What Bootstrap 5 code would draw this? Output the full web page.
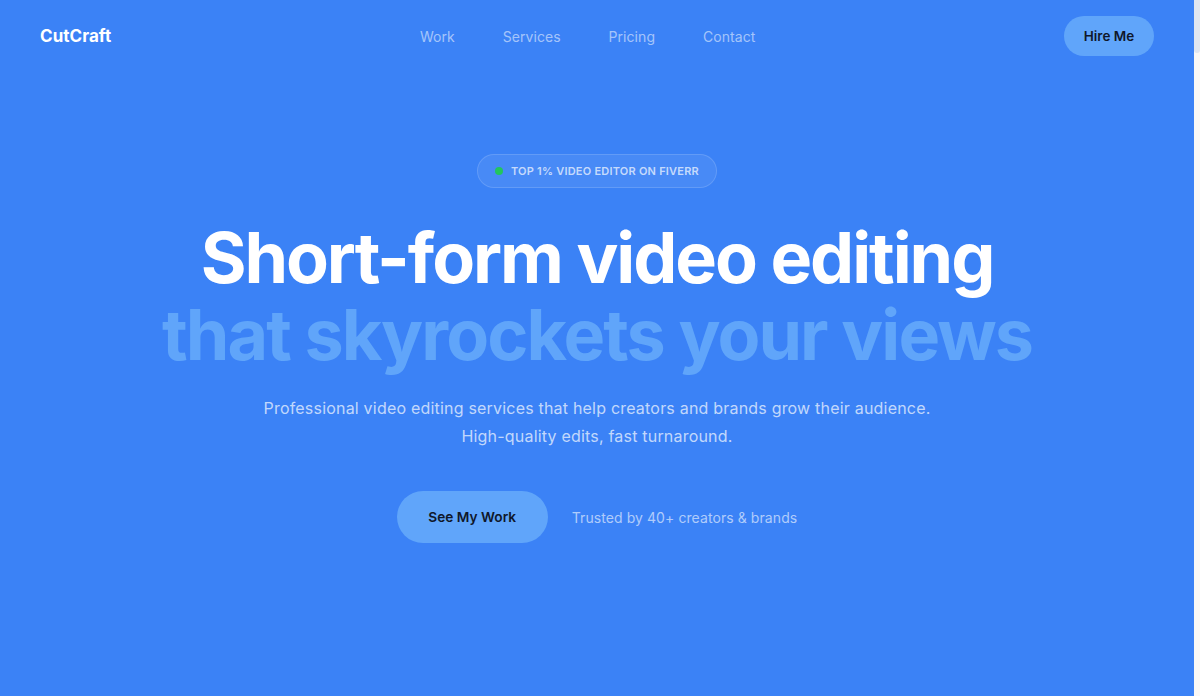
<!DOCTYPE html>
<html lang="en"><head><meta charset="utf-8"><title>CutCraft</title>
<link href="https://cdn.jsdelivr.net/npm/bootstrap@5.3.0/dist/css/bootstrap.min.css" rel="stylesheet">
<style>
html,body{height:100%;overflow:hidden}
body{background:#faf8f5;font-family:Inter,"Liberation Sans",sans-serif}
.shell{height:696px;display:flex}
.stage{flex:1;background:#3b82f6;color:#fff;min-width:0}
.rail{width:6px;background:#faf8f5}
.rail-thumb{height:53px;background:#e0e6f0;border-radius:0 0 3px 3px}
.topbar{height:72px;padding:0 40px}
.brand{font-size:17px;font-weight:700;color:#fff;letter-spacing:.05px;line-height:20px}
.menu{gap:48px}
.menu a{font-size:14px;color:rgba(255,255,255,.55);text-decoration:none;letter-spacing:.05px}
.hire{background:#60a5fa;color:#0f172a;font-weight:600;font-size:13.5px;border:0;border-radius:20px;padding:0;width:90px;height:40px}
.pill{margin-top:82px;height:34px;width:240px;border:1px solid rgba(255,255,255,.14);background:rgba(255,255,255,.07);border-radius:17px;font-size:11px;font-weight:600;letter-spacing:.22px;color:rgba(255,255,255,.7)}
.dot{width:8px;height:8px;border-radius:50%;background:#22c55e}
.hero-title{font-size:70px;font-weight:700;line-height:77px;margin:31px 0 0;letter-spacing:-2.04px}
.hero-title span{display:block;color:#60a5fa;letter-spacing:-1.92px}
.sub{margin:21px 0 0;font-size:16px;line-height:28px;color:rgba(255,255,255,.7);letter-spacing:.2px}
.cta-row{margin-top:41px;gap:24px}
.see{background:#60a5fa;color:#0f172a;font-weight:600;font-size:13.7px;border:0;border-radius:26px;width:151px;height:52px}
.trust{font-size:14px;color:rgba(255,255,255,.6);letter-spacing:.08px}
</style></head>
<body>
<div class="shell">
<div class="stage">
<nav class="topbar d-flex align-items-center justify-content-between">
<div class="brand">CutCraft</div>
<div class="menu d-flex"><a href="#">Work</a><a href="#">Services</a><a href="#">Pricing</a><a href="#">Contact</a></div>
<button class="btn hire" type="button">Hire Me</button>
</nav>
<main class="d-flex flex-column align-items-center text-center">
<div class="pill d-flex align-items-center justify-content-center gap-2"><i class="dot"></i>TOP 1% VIDEO EDITOR ON FIVERR</div>
<h1 class="hero-title">Short-form video editing<span>that skyrockets your views</span></h1>
<p class="sub">Professional video editing services that help creators and brands grow their audience.<br>High-quality edits, fast turnaround.</p>
<div class="cta-row d-flex align-items-center"><button class="btn see" type="button">See My Work</button><span class="trust">Trusted by 40+ creators &amp; brands</span></div>
</main>
</div>
<div class="rail"><div class="rail-thumb"></div></div>
</div>
<script src="https://cdn.jsdelivr.net/npm/bootstrap@5.3.0/dist/js/bootstrap.bundle.min.js"></script>
</body></html>
